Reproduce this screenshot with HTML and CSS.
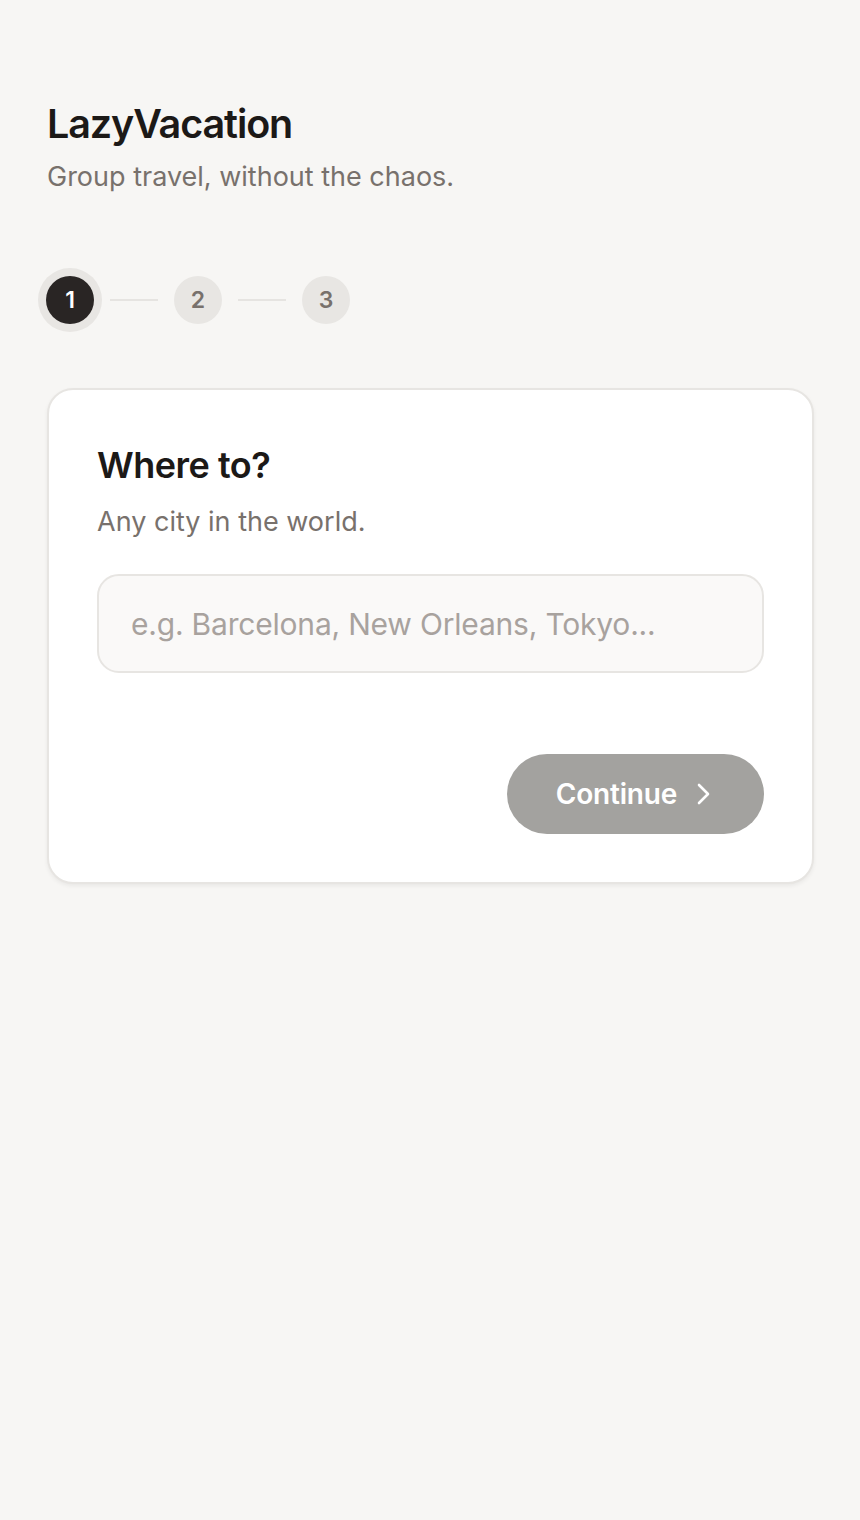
FILE: index.html
```html
<!DOCTYPE html>
<html lang="en">
<head>
<meta charset="utf-8">
<title>LazyVacation</title>
<link rel="stylesheet" href="styles.css">
</head>
<body>
<main class="page">
  <header class="brand">
    <h1 class="brand-title">LazyVacation</h1>
    <p class="brand-tagline">Group travel, without the chaos.</p>
  </header>

  <ol class="stepper">
    <li class="step step-active">1</li>
    <li class="step-line"></li>
    <li class="step">2</li>
    <li class="step-line"></li>
    <li class="step">3</li>
  </ol>

  <section class="card">
    <h2 class="card-title">Where to?</h2>
    <p class="card-sub">Any city in the world.</p>
    <input class="city-input" type="text" placeholder="e.g. Barcelona, New Orleans, Tokyo...">
    <div class="actions">
      <button class="btn-continue" type="button" disabled>
        <span>Continue</span>
        <svg class="chev" width="14" height="22" viewBox="0 0 14 22" fill="none" stroke="currentColor" stroke-width="2.6" stroke-linecap="round" stroke-linejoin="round"><path d="M3 2l9 9-9 9"/></svg>
      </button>
    </div>
  </section>
</main>
</body>
</html>
```
FILE: styles.css
```css
* { box-sizing: border-box; }
html, body { margin: 0; padding: 0; }
body {
  background: #f7f6f4;
  font-family: Inter, "Noto Sans", sans-serif;
  color: #1c1917;
  min-height: 1520px;
}
.page {
  padding: 99px 47px 0 47px;
}
.brand-title {
  margin: 0;
  font-size: 39.5px;
  line-height: 50px;
  font-weight: 600;
  letter-spacing: -1.1px;
  color: #1c1917;
}
.brand-tagline {
  margin: 10px 0 0 0;
  font-size: 27px;
  line-height: 36px;
  color: #78716c;
  letter-spacing: 0;
}
.stepper {
  list-style: none;
  margin: 81px 0 0 -1px;
  padding: 0;
  display: flex;
  align-items: center;
  gap: 16px;
}
.step {
  width: 48px;
  height: 48px;
  border-radius: 50%;
  background: #e8e6e3;
  color: #78716c;
  display: flex;
  align-items: center;
  justify-content: center;
  font-size: 23px;
  font-weight: 600;
}
.step-active {
  background: #292524;
  color: #ffffff;
  box-shadow: 0 0 0 8px #e8e6e3;
}
.step-line {
  width: 48px;
  height: 2px;
  background: #e6e4e1;
}
.card {
  margin-top: 64px;
  background: #ffffff;
  border: 2px solid #e7e5e2;
  border-radius: 26px;
  box-shadow: 0 2px 4px rgba(0,0,0,0.06);
  padding: 52px 48px 48px 48px;
  width: 767px;
}
.card-title {
  margin: 0;
  font-size: 36px;
  line-height: 46px;
  font-weight: 600;
  letter-spacing: -0.5px;
  color: #1c1917;
}
.card-sub {
  margin: 16px 0 0 0;
  font-size: 27px;
  line-height: 36px;
  color: #78716c;
  letter-spacing: 0;
}
.city-input {
  display: block;
  margin-top: 34px;
  width: 100%;
  height: 99px;
  border: 2px solid #e7e5e2;
  border-radius: 22px;
  background: #faf9f8;
  padding: 0 32px;
  font-family: Inter, "Noto Sans", sans-serif;
  font-size: 30px;
  color: #1c1917;
  outline: none;
}
.city-input::placeholder {
  color: #a8a29e;
  letter-spacing: -0.2px;
}
.actions {
  display: flex;
  justify-content: flex-end;
  margin-top: 81px;
}
.btn-continue {
  display: flex;
  align-items: center;
  gap: 19px;
  height: 80px;
  padding: 0 54px 0 49px;
  border: none;
  border-radius: 40px;
  background: #a3a29f;
  color: #ffffff;
  font-family: Inter, "Noto Sans", sans-serif;
  font-size: 28px;
  font-weight: 600;
  letter-spacing: -0.2px;
}
.chev { display: block; }
```
